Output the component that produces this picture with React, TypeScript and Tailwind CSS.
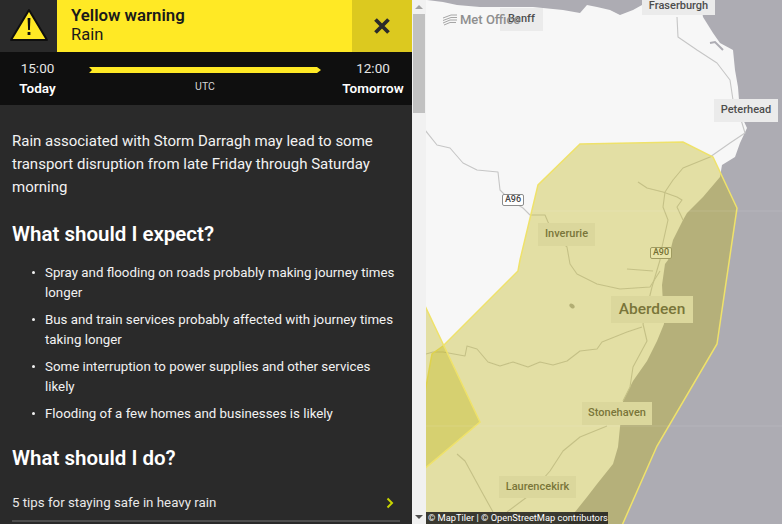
const LAND =
  "M426,0 L427,0 L443,2 L457,5 L480,7 L533,7 L563,10 L580,13 L587,5 L597,7 L610,10 L620,15 L633,10 L642,5 L643,0 L700,0 L703,17 L713,33 L720,43 L733,50 L735,70 L738,87 L740,113 L747,128 L740,143 L735,157 L722,165 L720,177 L703,197 L687,213 L683,220 L673,240 L668,260 L665,264 L662,285 L664,324 L657,341 L647,361 L633,381 L623,401 L620,427 L618,447 L613,464 L597,484 L587,497 L575,512 L567,524 L426,524 Z";

const ROADS = [
  "M425,130 L437,145 L450,148 L463,163 L477,170 L498,172 L500,190 L510,200 L523,208 L530,215 L545,215 L548,222 L555,235 L567,247 L570,264 L577,274 L597,284 L620,289 L650,287 L660,271",
  "M677,17 L678,37 L697,50 L717,63 L730,80 L733,100 L742,123 L745,133 L730,143 L710,157 L683,168 L673,180 L665,192 L663,207 L668,220 L662,247 L660,260 L652,287 L643,324 L647,341 L633,367 L630,387 L623,401",
  "M638,182 L647,188 L663,192 L677,197 L682,200 L677,207 L683,220",
  "M642,327 L627,332 L602,342 L597,349 L580,351 L567,361 L553,365 L540,362 L528,367 L513,362 L500,366 L488,362 L477,349 L467,346 L465,356 L443,352 L433,352 L426,354",
  "M607,426 L580,437 L563,451 L550,471 L527,497 L507,512",
  "M457,454 L465,461 L483,494 L493,512",
  "M627,269 L653,271",
];

const MAP_LABELS = [
  { text: "Fraserburgh", box: "left-[216px] -top-[2px] h-[17px] w-[73px] text-[11px]" },
  { text: "Peterhead", box: "left-[288px] top-[99px] h-[23px] w-[64px] text-[11px]" },
  { text: "Inverurie", box: "left-[112px] top-[223px] h-[23px] w-[57px] text-[11px]" },
  { text: "Aberdeen", box: "left-[185px] top-[296px] h-[27px] w-[82px] text-[15.5px]" },
  { text: "Stonehaven", box: "left-[156px] top-[402px] h-[23px] w-[70px] text-[11px]" },
  { text: "Laurencekirk", box: "left-[73px] top-[476px] h-[22px] w-[77px] text-[11px]" },
  { text: "Banff", box: "left-[74px] top-[8px] h-[23px] w-[43px] text-[11px]" },
];

const ITEMS = [
  "Spray and flooding on roads probably making journey times longer",
  "Bus and train services probably affected with journey times taking longer",
  "Some interruption to power supplies and other services likely",
  "Flooding of a few homes and businesses is likely",
];

function Scrollbar() {
  return (
    <div className="flex h-full w-[14px] shrink-0 flex-col items-center bg-[#f1f1f1]">
      <div className="flex h-[14px] w-full items-center justify-center">
        <div className="h-0 w-0 border-x-[4px] border-b-[4px] border-x-transparent border-b-[#a3a3a3]" />
      </div>
      <div className="h-[99px] w-[12px] bg-[#c1c1c1]" />
      <div className="flex-1" />
      <div className="flex h-[14px] w-full items-center justify-center">
        <div className="h-0 w-0 border-x-[4px] border-t-[4px] border-x-transparent border-t-[#505050]" />
      </div>
    </div>
  );
}

function Panel() {
  return (
    <div className="flex h-full w-[412px] shrink-0 flex-col overflow-hidden bg-[#2a2a2a] font-['Roboto',sans-serif] text-white">
      <div className="flex h-[52px] shrink-0">
        <div className="flex w-[57px] items-center justify-center bg-[#2a2a2a]">
          <svg width="40" height="36" viewBox="0 0 40 36" className="-mt-[2px]">
            <path d="M20,3 L38,33 L2,33 Z" fill="#ffe925" stroke="#0f0f0f" strokeWidth="2" strokeLinejoin="round" />
            <path d="M18.6,11 h2.8 l-0.5,12 h-1.8 Z" fill="#0f0f0f" />
            <rect x="18.6" y="25" width="2.8" height="3" fill="#0f0f0f" />
          </svg>
        </div>
        <div className="flex flex-1 flex-col justify-center bg-[#ffe925] pb-[3px] pl-[14px] text-[#1a1a1a]">
          <div className="text-[16.8px] font-semibold leading-[20px]">Yellow warning</div>
          <div className="text-[16.5px] leading-[20px]">Rain</div>
        </div>
        <div className="flex w-[60px] items-center justify-center bg-[#dcc91f]">
          <svg width="18" height="18" viewBox="0 0 18 18">
            <path d="M2.5,2.5 L15.5,15.5 M15.5,2.5 L2.5,15.5" stroke="#2a2a2a" strokeWidth="3.8" />
          </svg>
        </div>
      </div>
      <div className="flex h-[53px] shrink-0 bg-[#0f0f0f] pr-[6px]">
        <div className="flex w-[75px] flex-col items-center pt-[7px]">
          <div className="text-[13.5px] leading-[18px] text-[#e6e6e6]">15:00</div>
          <div className="mt-[2px] text-[13.5px] font-semibold leading-[18px]">Today</div>
        </div>
        <div className="flex flex-1 flex-col items-center pl-[14px] pr-[19px] pt-[14px]">
          <svg width="232" height="8" viewBox="0 0 232 8" className="block">
            <path d="M0,1 L228,1 L232,4 L228,7 L0,7 L3,4 Z" fill="#ffe925" />
          </svg>
          <div className="mt-[5px] text-[10.5px] leading-[16px] text-[#d5d5d5]">UTC</div>
        </div>
        <div className="flex w-[66px] flex-col items-center pt-[7px]">
          <div className="text-[13.5px] leading-[18px] text-[#e6e6e6]">12:00</div>
          <div className="mt-[2px] whitespace-nowrap text-[13.5px] font-semibold leading-[18px]">Tomorrow</div>
        </div>
      </div>
      <div className="flex-1 px-[12px] pt-[25px]">
        <p className="pr-[14px] text-[15px] leading-[23px] text-[#f2f2f2]">
          Rain associated with Storm Darragh may lead to some transport disruption from late Friday through Saturday morning
        </p>
        <h2 className="mt-[22px] text-[20.5px] font-semibold leading-[26px]">What should I expect?</h2>
        <ul className="mt-[16px] flex flex-col gap-[7px] pl-[33px]">
          {ITEMS.map((item) => (
            <li key={item} className="relative text-[13.3px] leading-[20px] text-[#f2f2f2]">
              <span className="absolute -left-[13px] top-[8px] h-[3px] w-[3px] rounded-full bg-[#f2f2f2]" />
              {item}
            </li>
          ))}
        </ul>
        <h2 className="mt-[21px] text-[20.5px] font-semibold leading-[26px]">What should I do?</h2>
        <div className="mt-[22px] flex items-center justify-between border-b-[2px] border-[#4d4d4d] pb-[7px] pr-[6px]">
          <span className="text-[13.3px] leading-[20px] text-[#e8e8e8]">5 tips for staying safe in heavy rain</span>
          <svg width="8" height="12" viewBox="0 0 8 12">
            <path d="M1.5,1.5 L6,6 L1.5,10.5" fill="none" stroke="#c8d400" strokeWidth="2" />
          </svg>
        </div>
      </div>
    </div>
  );
}

function MapView() {
  return (
    <div className="relative h-full flex-1 overflow-hidden bg-[#adacb3] font-['Roboto',sans-serif]">
      <svg className="absolute inset-0" width="356" height="524" viewBox="426 0 356 524">
        <path d={LAND} fill="#f7f7f7" />
        {ROADS.map((d) => (
          <path key={d} d={d} fill="none" stroke="#c6c6c6" strokeWidth="1.1" strokeLinejoin="round" />
        ))}
        <path d="M710,43 L715,42 L723,50" fill="none" stroke="#adacb3" strokeWidth="2" />
        <ellipse cx="572" cy="306" rx="3" ry="2" fill="#a9a9a9" transform="rotate(35 572 306)" />
      </svg>

      {MAP_LABELS.map((l) => (
        <div key={l.text} className={`absolute flex items-center justify-center bg-[#ebebeb] font-medium whitespace-nowrap text-[#4d4d4d] ${l.box}`}>
          {l.text}
        </div>
      ))}

      {/* Met Office logo */}
      <div className="absolute left-[16px] top-[13px] flex items-center gap-[2px]">
        <svg width="16" height="12" viewBox="0 0 16 12">
          <path d="M1,4 L9,1 L15,1 M1,6.5 L9,3.5 L15,3.5 M1,9 L8,6 L15,6 M2,11 L8,8.5 L14,8.5" fill="none" stroke="#a6a6a6" strokeWidth="1" />
        </svg>
        <span className="whitespace-nowrap text-[13px] font-medium leading-[14px] text-[#8f8f8f]">Met Office</span>
      </div>

      <div className="absolute left-[76px] top-[194px] flex h-[12px] w-[22px] items-center justify-center rounded-[2px] border border-[#8c8c8c] bg-white text-[9px] font-medium text-[#444444]">A96</div>
      <div className="absolute left-[224px] top-[247px] flex h-[12px] w-[22px] items-center justify-center rounded-[2px] border border-[#8c8c8c] bg-white text-[9px] font-medium text-[#444444]">A90</div>

      {/* warning polygons */}
      <svg className="absolute inset-0" width="356" height="524" viewBox="426 0 356 524">
        <path
          d="M580,144 L683,142 L713,157 L737,208 L717,344 L657,446 L620,530 L416,530 L420,420 L432,354 L443,346 L518,271 L520,260 L538,185 Z"
          fill="#c2b81d"
          fillOpacity="0.38"
          stroke="#efe26a"
          strokeWidth="1.5"
        />
        <path
          d="M416,287 L480,422 L416,476 Z"
          fill="#c2b81d"
          fillOpacity="0.38"
          stroke="#efe26a"
          strokeWidth="1.5"
        />
        <path d="M426,211 H782 M426,426 H782" stroke="#ffffff" strokeOpacity="0.12" strokeWidth="1" />
      </svg>

      <div className="absolute bottom-0 left-0 h-[12px] w-[182px] overflow-hidden bg-[#1c1c1c]/85 pl-[2px] text-[9.3px] leading-[12px] whitespace-nowrap text-white">
        © MapTiler | © OpenStreetMap contributors
      </div>
    </div>
  );
}

export default function App() {
  return (
    <div className="flex h-[524px] w-[782px] overflow-hidden">
      <Panel />
      <Scrollbar />
      <MapView />
    </div>
  );
}
